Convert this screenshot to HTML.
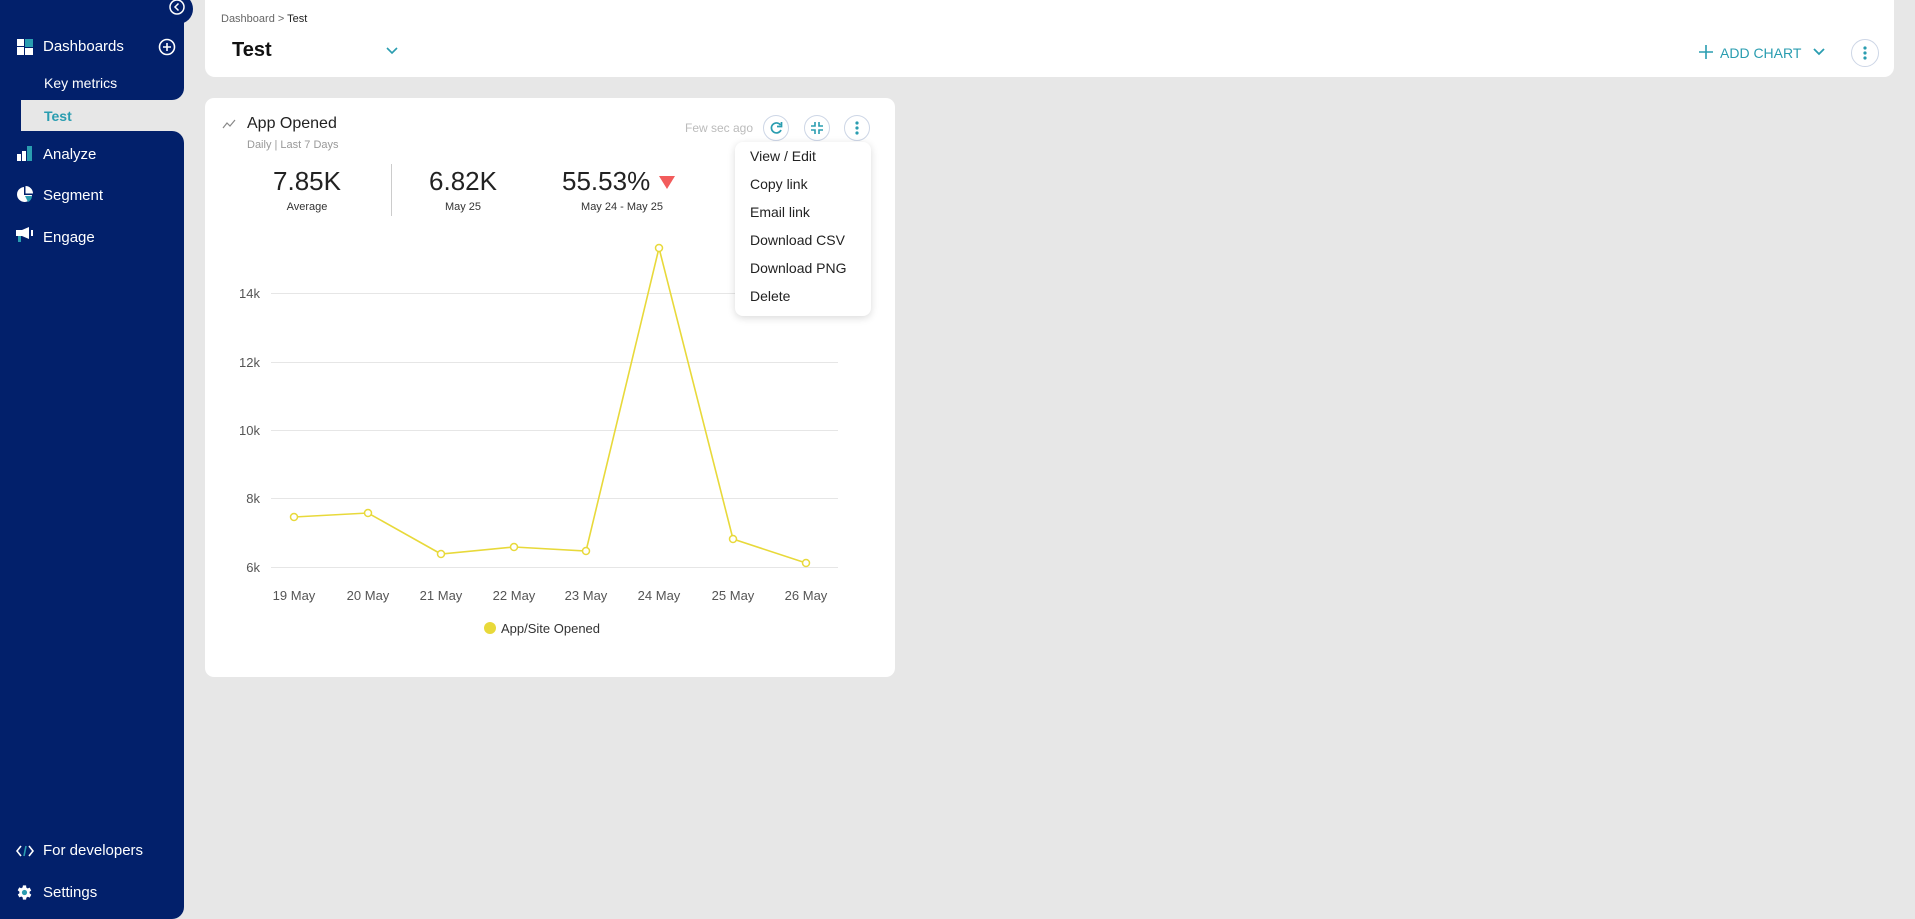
<!DOCTYPE html>
<html><head><meta charset="utf-8"><style>
*{box-sizing:border-box;margin:0;padding:0}
body{width:1915px;height:919px;background:#e7e7e7;font-family:"Liberation Sans",sans-serif;position:relative;overflow:hidden;color:#222}
.a{position:absolute}
.sb{left:0;top:0;width:184px;background:#02206b}
.nav{color:#fff;font-size:15px;left:43px}
.teal{color:#2a9db0}
.card{background:#fff}
.btn{width:26px;height:26px;border:1px solid #cdd6e6;border-radius:50%;display:flex;align-items:center;justify-content:center}
.mi{left:750px;font-size:14px;color:#222}
.yl{font-size:13px;color:#555;text-align:right;width:30px;left:230px}
.xl{font-size:13px;color:#555;width:60px;text-align:center;top:588px}
</style></head><body>
<!-- sidebar -->
<div class="a sb" style="height:100px;border-bottom-right-radius:12px"></div>
<div class="a" style="left:0;top:95px;width:21px;height:40px;background:#02206b"></div>
<div class="a" style="left:21px;top:101px;width:163px;height:30px;background:#e7e7e7;border-radius:12px 0 0 12px"></div>
<div class="a sb" style="top:131px;height:788px;border-top-right-radius:12px;border-bottom-right-radius:12px"></div>
<div class="a" style="left:163px;top:-6px;width:30px;height:30px;border-radius:50%;background:#02206b"></div>
<svg class="a" style="left:168px;top:0" width="20" height="16"><circle cx="9" cy="7" r="7" fill="none" stroke="#fff" stroke-width="1.5"/><path d="M10.5 3.5 7 7l3.5 3.5" fill="none" stroke="#fff" stroke-width="1.5"/></svg>
<svg class="a" style="left:17px;top:39px" width="16" height="16"><rect x="0" y="0" width="7" height="7" fill="#fff"/><rect x="8" y="0" width="8" height="8" fill="#2a9db0"/><rect x="0" y="8" width="7" height="8" fill="#fff"/><rect x="8" y="9" width="8" height="7" fill="#fff"/></svg>
<div class="a nav" style="top:38px">Dashboards</div>
<svg class="a" style="left:158px;top:38px" width="18" height="18"><circle cx="9" cy="9" r="7.5" fill="none" stroke="#fff" stroke-width="1.6"/><path d="M9 5v8M5 9h8" stroke="#fff" stroke-width="1.6"/></svg>
<div class="a nav" style="top:75px;left:44px;font-size:14px">Key metrics</div>
<div class="a teal" style="top:108px;left:44px;font-size:14px;font-weight:bold">Test</div>
<svg class="a" style="left:17px;top:146px" width="16" height="15"><rect x="0" y="8" width="4" height="7" fill="#fff"/><rect x="5" y="5" width="4" height="10" fill="#fff"/><rect x="10" y="0" width="5" height="15" fill="#2a9db0"/></svg>
<div class="a nav" style="top:146px">Analyze</div>
<svg class="a" style="left:16px;top:186px" width="17" height="17"><path d="M8 1A7.5 7.5 0 1 0 16 9H8Z" fill="#fff"/><path d="M9.5 0A7.5 7.5 0 0 1 17 7.5H9.5Z" fill="#fff"/><path d="M9 10h7a7 7 0 0 1-4 6z" fill="#2a9db0"/></svg>
<div class="a nav" style="top:187px">Segment</div>
<svg class="a" style="left:16px;top:227px" width="18" height="16"><rect x="0" y="3" width="6" height="6" fill="#fff"/><path d="M6 3l7-3v12l-7-3z" fill="#fff"/><rect x="15" y="3" width="2" height="6" fill="#fff"/><rect x="2" y="9" width="3" height="6" fill="#2a9db0"/></svg>
<div class="a nav" style="top:229px">Engage</div>
<svg class="a" style="left:16px;top:844px" width="18" height="14"><path d="M5 2 1 7l4 5M13 2l4 5-4 5" fill="none" stroke="#fff" stroke-width="1.6"/><path d="M10 2 8 12" stroke="#2a9db0" stroke-width="1.6"/></svg>
<div class="a nav" style="top:842px">For developers</div>
<svg class="a" style="left:15px;top:883px" width="19" height="19" viewBox="0 0 24 24"><path fill="#fff" d="M19.4 13a7.5 7.5 0 0 0 0-2l2.1-1.6-2-3.5-2.5 1a7 7 0 0 0-1.7-1L15 3h-4l-.4 2.6a7 7 0 0 0-1.7 1l-2.5-1-2 3.5L6.6 11a7.5 7.5 0 0 0 0 2l-2.1 1.6 2 3.5 2.5-1a7 7 0 0 0 1.7 1L11 21h4l.4-2.6a7 7 0 0 0 1.7-1l2.5 1 2-3.5z" transform="translate(-1 0)"/><circle cx="12" cy="12" r="3.3" fill="#2a9db0"/></svg>
<div class="a nav" style="top:884px">Settings</div>

<!-- header -->
<div class="a card" style="left:205px;top:0;width:1689px;height:77px;border-radius:0 0 10px 10px"></div>
<div class="a" style="left:221px;top:13px;font-size:11px;color:#666">Dashboard &gt; <span style="color:#222">Test</span></div>
<div class="a" style="left:232px;top:39px;font-size:20px;font-weight:bold;color:#111">Test</div>
<svg class="a" style="left:386px;top:47px" width="12" height="8"><path d="M1 1l5 5 5-5" fill="none" stroke="#2a9db0" stroke-width="1.6"/></svg>
<svg class="a" style="left:1699px;top:45px" width="14" height="14"><path d="M7 0v14M0 7h14" stroke="#2a9db0" stroke-width="1.6"/></svg>
<div class="a teal" style="left:1720px;top:45px;font-size:14px">ADD CHART</div>
<svg class="a" style="left:1813px;top:48px" width="12" height="8"><path d="M1 1l5 5 5-5" fill="none" stroke="#2a9db0" stroke-width="1.8"/></svg>
<div class="a btn" style="left:1851px;top:39px;width:28px;height:28px"><svg width="4" height="14"><circle cx="2" cy="2" r="1.6" fill="#2a9db0"/><circle cx="2" cy="7" r="1.6" fill="#2a9db0"/><circle cx="2" cy="12" r="1.6" fill="#2a9db0"/></svg></div>

<!-- chart card -->
<div class="a card" style="left:205px;top:98px;width:690px;height:579px;border-radius:9px"></div>
<svg class="a" style="left:222px;top:119px" width="14" height="10"><path d="M1 9l4-5 3 3 5-6" fill="none" stroke="#888" stroke-width="1.2"/></svg>
<div class="a" style="left:247px;top:115px;font-size:16px;color:#222">App Opened</div>
<div class="a" style="left:247px;top:139px;font-size:11px;color:#999">Daily | Last 7 Days</div>
<div class="a" style="left:257px;top:166px;width:100px;text-align:center;font-size:26px;color:#222">7.85K</div>
<div class="a" style="left:257px;top:201px;width:100px;text-align:center;font-size:11px;color:#333">Average</div>
<div class="a" style="left:391px;top:164px;width:1px;height:52px;background:#ccc"></div>
<div class="a" style="left:413px;top:166px;width:100px;text-align:center;font-size:26px;color:#222">6.82K</div>
<div class="a" style="left:413px;top:201px;width:100px;text-align:center;font-size:11px;color:#333">May 25</div>
<div class="a" style="left:562px;top:166px;width:110px;font-size:26px;color:#222">55.53%</div>
<svg class="a" style="left:659px;top:176px" width="16" height="13"><path d="M0 0h16L8 13z" fill="#f25c5c"/></svg>
<div class="a" style="left:562px;top:201px;width:120px;text-align:center;font-size:11px;color:#333">May 24 - May 25</div>
<div class="a" style="left:685px;top:121px;font-size:12px;color:#bbb">Few sec ago</div>
<div class="a btn" style="left:763px;top:115px"><svg width="14" height="14"><path d="M11.5 4A5 5 0 1 0 12 9" fill="none" stroke="#2a9db0" stroke-width="1.7"/><path d="M12.5 1v4.5H8" fill="none" stroke="#2a9db0" stroke-width="1.7"/></svg></div>
<div class="a btn" style="left:804px;top:115px"><svg width="14" height="14" stroke="#2a9db0" stroke-width="1.6" fill="none"><path d="M5 1v4H1M9 1v4h4M5 13V9H1M9 13V9h4"/></svg></div>
<div class="a btn" style="left:844px;top:115px"><svg width="4" height="14"><circle cx="2" cy="2" r="1.6" fill="#2a9db0"/><circle cx="2" cy="7" r="1.6" fill="#2a9db0"/><circle cx="2" cy="12" r="1.6" fill="#2a9db0"/></svg></div>

<!-- chart -->
<svg class="a" style="left:0;top:0" width="900" height="680">
<g stroke="#e6e6e6" stroke-width="1"><line x1="271" y1="293.5" x2="838" y2="293.5"/><line x1="271" y1="362.5" x2="838" y2="362.5"/><line x1="271" y1="430.5" x2="838" y2="430.5"/><line x1="271" y1="498.5" x2="838" y2="498.5"/><line x1="271" y1="567.5" x2="838" y2="567.5"/></g>
<polyline fill="none" stroke="#e8d93a" stroke-width="1.6" points="294,517 368,513 441,554 514,547 586,551 659,248 733,539 806,563"/>
<g fill="#fff" stroke="#e8d93a" stroke-width="1.5"><circle cx="294" cy="517" r="3.5"/><circle cx="368" cy="513" r="3.5"/><circle cx="441" cy="554" r="3.5"/><circle cx="514" cy="547" r="3.5"/><circle cx="586" cy="551" r="3.5"/><circle cx="659" cy="248" r="3.5"/><circle cx="733" cy="539" r="3.5"/><circle cx="806" cy="563" r="3.5"/></g>
<circle cx="490" cy="628" r="6" fill="#e8d93a"/>
</svg>
<div class="a yl" style="top:286px">14k</div>
<div class="a yl" style="top:355px">12k</div>
<div class="a yl" style="top:423px">10k</div>
<div class="a yl" style="top:491px">8k</div>
<div class="a yl" style="top:560px">6k</div>
<div class="a xl" style="left:264px">19 May</div>
<div class="a xl" style="left:338px">20 May</div>
<div class="a xl" style="left:411px">21 May</div>
<div class="a xl" style="left:484px">22 May</div>
<div class="a xl" style="left:556px">23 May</div>
<div class="a xl" style="left:629px">24 May</div>
<div class="a xl" style="left:703px">25 May</div>
<div class="a xl" style="left:776px">26 May</div>
<div class="a" style="left:501px;top:621px;font-size:13px;color:#333">App/Site Opened</div>

<!-- menu -->
<div class="a card" style="left:735px;top:142px;width:136px;height:174px;border-radius:8px;box-shadow:0 2px 8px rgba(0,0,0,.15)"></div>
<div class="a mi" style="top:148px">View / Edit</div>
<div class="a mi" style="top:176px">Copy link</div>
<div class="a mi" style="top:204px">Email link</div>
<div class="a mi" style="top:232px">Download CSV</div>
<div class="a mi" style="top:260px">Download PNG</div>
<div class="a mi" style="top:288px">Delete</div>
</body></html>
